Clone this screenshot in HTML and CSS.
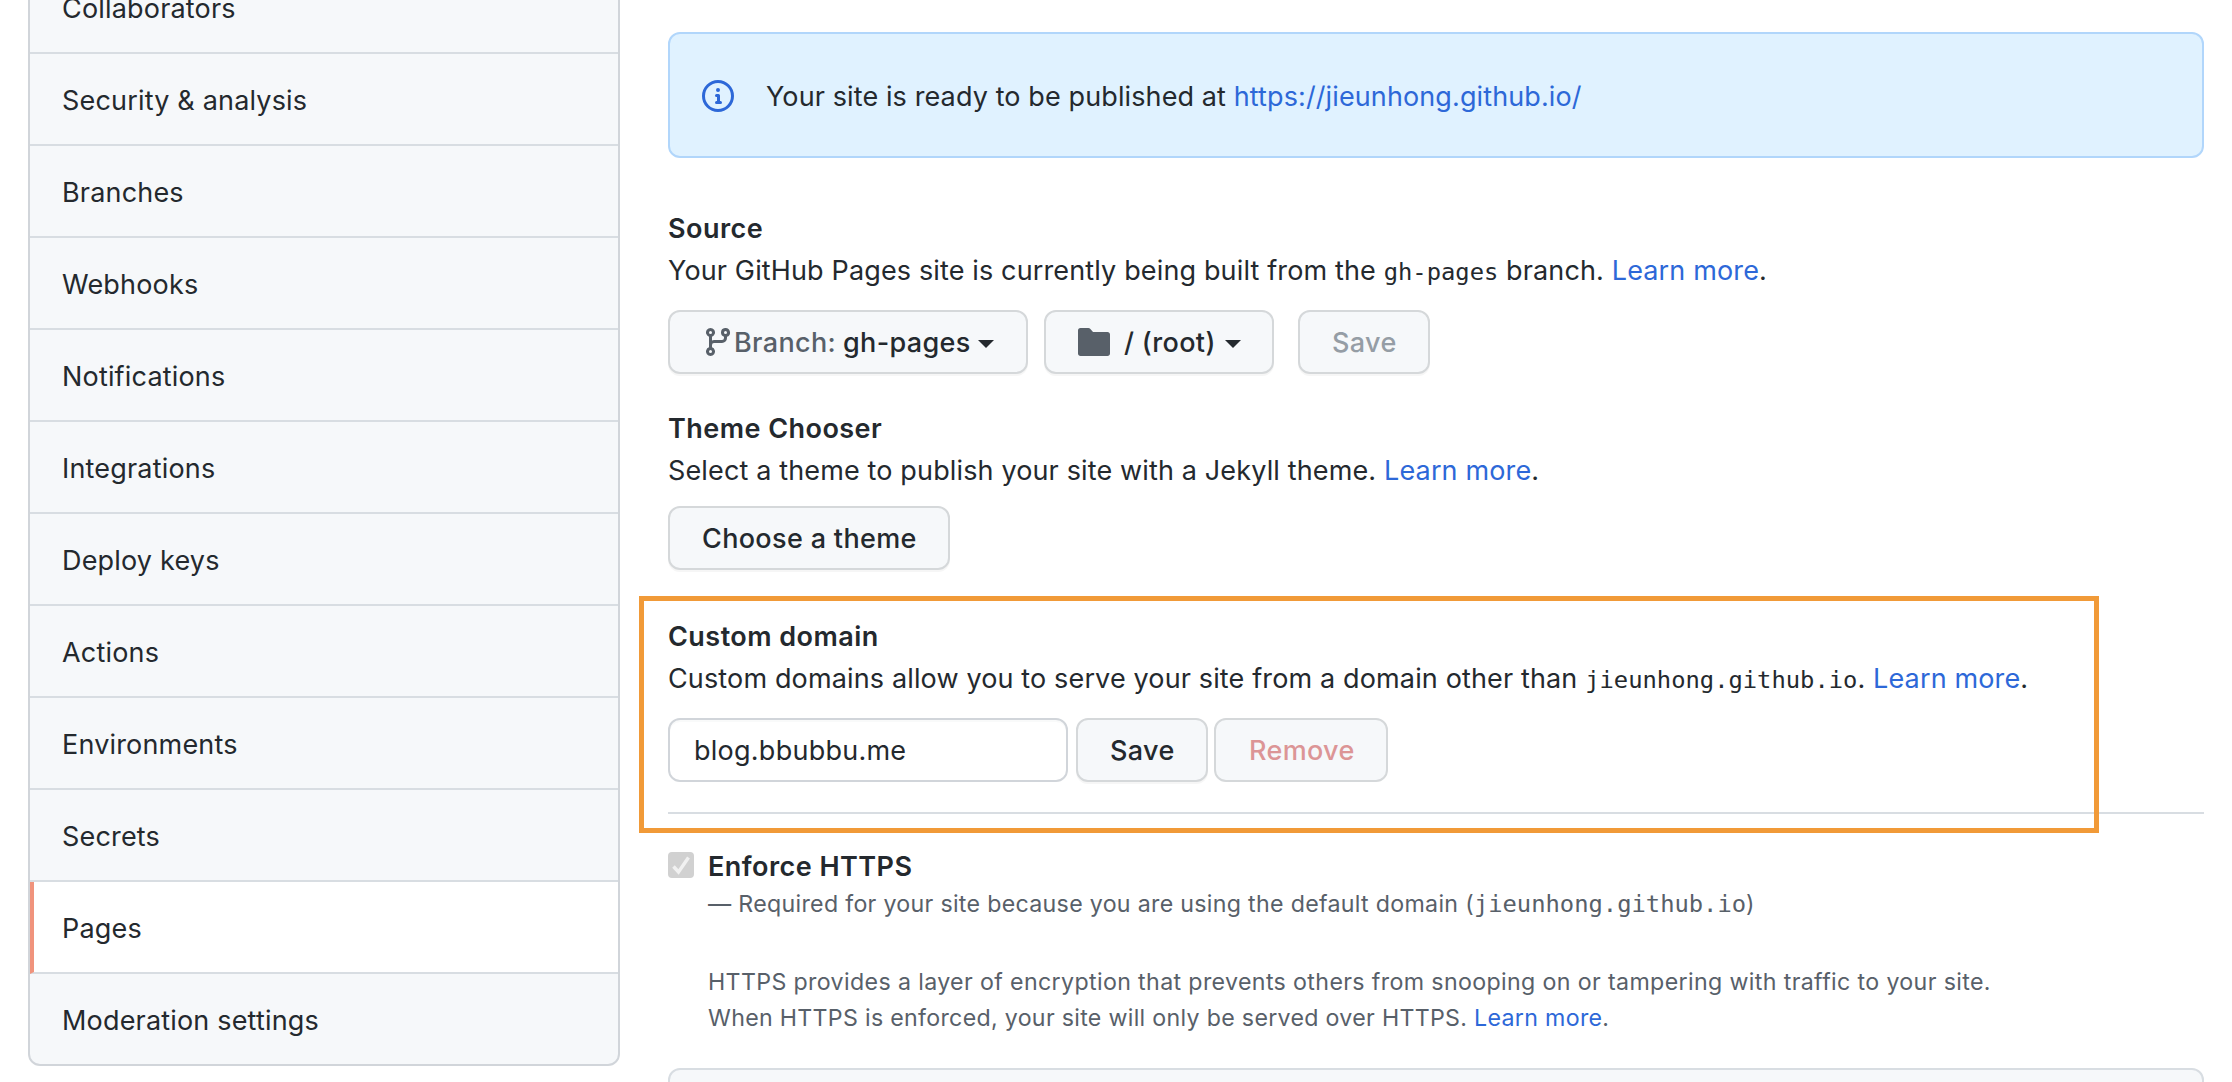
FILE: index.html
```html
<!DOCTYPE html>
<html lang="en">
<head>
<meta charset="utf-8">
<title>Pages settings</title>
<link rel="stylesheet" href="styles.css">
</head>
<body>
<div class="layout">
  <nav class="menu">
    <a class="menu-item">Collaborators</a>
    <a class="menu-item">Security &amp; analysis</a>
    <a class="menu-item">Branches</a>
    <a class="menu-item">Webhooks</a>
    <a class="menu-item">Notifications</a>
    <a class="menu-item">Integrations</a>
    <a class="menu-item">Deploy keys</a>
    <a class="menu-item">Actions</a>
    <a class="menu-item">Environments</a>
    <a class="menu-item">Secrets</a>
    <a class="menu-item selected">Pages</a>
    <a class="menu-item">Moderation settings</a>
  </nav>

  <main class="content">
    <div class="flash">
      <svg class="icon info" viewBox="0 0 16 16"><path fill-rule="evenodd" d="M8 1.5a6.5 6.5 0 100 13 6.5 6.5 0 000-13zM0 8a8 8 0 1116 0A8 8 0 010 8zm6.5-.25A.75.75 0 017.25 7h1a.75.75 0 01.75.75v2.75h.25a.75.75 0 010 1.5h-2a.75.75 0 010-1.5h.25v-2h-.25a.75.75 0 01-.75-.75zM8 6a1 1 0 100-2 1 1 0 000 2z"/></svg>
      <p class="flash-text">Your site is ready to be published at <a class="link">https://jieunhong.github.io/</a></p>
    </div>

    <section class="section source">
      <h3 class="title">Source</h3>
      <p class="text">Your GitHub Pages site is currently being built from the <code class="code">gh-pages</code> branch. <a class="link">Learn more</a>.</p>
      <div class="controls">
        <button class="btn branch">
          <svg class="icon" viewBox="0 0 16 16"><path fill-rule="evenodd" d="M11.75 2.5a.75.75 0 100 1.5.75.75 0 000-1.5zm-2.25.75a2.25 2.25 0 113 2.122V6A2.5 2.5 0 0110 8.500H6a1 1 0 00-1 1v1.128a2.251 2.251 0 11-1.500 0V5.372a2.250 2.250 0 111.500 0v1.836A2.492 2.492 0 016 7h4a1 1 0 001-1v-.628A2.250 2.250 0 019.500 3.250zM4.250 12a.75.75 0 100 1.500.75.75 0 000-1.500zM3.500 3.250a.75.75 0 111.500 0 .75.75 0 01-1.500 0z"/></svg>
          <span class="label muted">Branch:</span>
          <span class="label value">gh-pages</span>
          <span class="caret"></span>
        </button>
        <button class="btn folder">
          <svg class="icon" viewBox="0 0 16 16"><path d="M1.250 1A1.250 1.250 0 000 2.250v11.500C0 14.450.550 15 1.250 15h13.500c.700 0 1.250-.550 1.250-1.250v-9.500C16 3.550 15.450 3 14.750 3h-7a.5.5 0 01-.35-.15L6.200 1.500C5.900 1.150 5.600 1 5.150 1z"/></svg>
          <span class="label value">/ (root)</span>
          <span class="caret"></span>
        </button>
        <button class="btn save" disabled><span class="label">Save</span></button>
      </div>
    </section>

    <section class="section theme">
      <h3 class="title">Theme Chooser</h3>
      <p class="text">Select a theme to publish your site with a Jekyll theme. <a class="link">Learn more</a>.</p>
      <div class="controls"><button class="btn choose"><span class="label">Choose a theme</span></button></div>
    </section>

    <section class="section domain">
      <h3 class="title">Custom domain</h3>
      <p class="text">Custom domains allow you to serve your site from a domain other than <code class="code">jieunhong.github.io</code>. <a class="link">Learn more</a>.</p>
      <div class="controls">
        <input class="field" type="text" value="blog.bbubbu.me">
        <button class="btn save"><span class="label">Save</span></button>
        <button class="btn remove" disabled><span class="label">Remove</span></button>
      </div>
      <div class="highlight"></div>
    </section>

    <section class="https">
      <svg class="checkbox" viewBox="0 0 26 26"><rect width="26" height="26" rx="4" fill="#d1d1d1"/><path d="M5.500 14.500l5 5.500L20.500 5.500" fill="none" stroke="#f1f1f1" stroke-width="3.400"/></svg>
      <div class="https-body">
        <h3 class="title">Enforce HTTPS</h3>
        <p class="note">— Required for your site because you are using the default domain (<code class="code">jieunhong.github.io</code>)</p>
        <p class="note detail"><span class="wide">HTTPS provides a layer of encryption that prevents others from snooping on or tampering with traffic to your site.</span><br>When HTTPS is enforced, your site will only be served over HTTPS. <a class="link">Learn more</a>.</p>
      </div>
    </section>

    <div class="panel"></div>
  </main>
</div>
</body>
</html>
```
FILE: styles.css
```css
* { box-sizing: border-box; }

body {
  margin: 0;
  height: 1082px;
  overflow: hidden;
  background: #fff;
  color: #24292e;
  font: 400 27px/42px Inter, "Liberation Sans", sans-serif;
  letter-spacing: 0.14px;
}

h3, p { margin: 0; white-space: nowrap; }

.layout {
  display: grid;
  grid-template-columns: 592px 1536px;
  column-gap: 48px;
  align-items: start;
  padding-left: 28px;
  height: 1082px;
  overflow: hidden;
}

/* Side menu, scrolled so that its first row is cut off */
.menu {
  display: flex;
  flex-direction: column;
  margin-top: -40px;
  border: 2px solid #d1d5da;
  border-radius: 12px;
  background: #f6f8fa;
  overflow: hidden;
}
.menu-item {
  height: 92px;
  padding-left: 32px;
  border-bottom: 2px solid #d8dde2;
  line-height: 94px;
  letter-spacing: 0.18px;
}
.menu-item:last-child { border-bottom: 0; height: 90px; }
.menu-item.selected {
  padding-left: 28px;
  border-left: 4px solid #f0937c;
  background: #fff;
}

.content { padding-top: 32px; }

.link { color: #2d68d8; }
.icon { width: 32px; height: 32px; fill: currentColor; flex: none; }
.code {
  font: 400 23.8px/1 "DejaVu Sans Mono", "Liberation Mono", monospace;
  letter-spacing: 0;
}

.flash {
  display: flex;
  align-items: center;
  height: 126px;
  padding-left: 32px;
  border: 2px solid #b1d6fb;
  border-radius: 12px;
  background: #e0f2ff;
}
.info { color: #2d68d8; margin-top: 2px; }
.flash-text { margin-left: 32px; padding-top: 4px; letter-spacing: 0.11px; }

.section { position: relative; }
.title { font-size: 27px; font-weight: 600; letter-spacing: 0.46px; }
.source { margin-top: 50px; }
.theme { margin-top: 34px; }
.domain { margin-top: 46px; padding-bottom: 30px; border-bottom: 2px solid #d8dde2; }

.controls { display: flex; margin-top: 18px; }
.theme .controls { margin-top: 14px; }

.btn {
  display: flex;
  align-items: center;
  height: 64px;
  padding: 0 32px;
  border: 2px solid #d5d8da;
  border-radius: 12px;
  background: #f6f8fa;
  box-shadow: 0 2px 0 rgba(27, 31, 35, 0.04);
  color: #24292e;
  font: 500 27px/42px Inter, "Liberation Sans", sans-serif;
  letter-spacing: 0.34px;
  white-space: nowrap;
}
.btn .icon, .muted { color: #586069; }
.label { padding-top: 2px; }
.branch { width: 360px; }
.branch .value { margin-left: 7px; }
.folder { width: 230px; margin-left: 16px; }
.folder .value { margin-left: 14px; }
.save { width: 132px; }
.source .save { margin-left: 24px; color: #959da5; }
.choose { width: 282px; }
.caret {
  margin: 4px 0 0 7px;
  border: 8px solid transparent;
  border-top-color: currentColor;
  border-bottom: 0;
}
.folder .caret { margin-left: 9px; }

.field {
  width: 400px;
  height: 64px;
  margin: 0 8px 0 0;
  padding: 0 24px;
  border: 2px solid #d1d5da;
  border-radius: 12px;
  background: #fff;
  box-shadow: inset 0 2px 0 rgba(225, 228, 232, 0.2);
  color: inherit;
  font: inherit;
  letter-spacing: 0.25px;
}
.remove { width: 174px; margin-left: 6px; padding-left: 33px; box-shadow: none; color: #dc9596; }

/* Orange annotation frame laid over the custom domain block */
.highlight {
  position: absolute;
  left: -29px;
  top: -20px;
  width: 1460px;
  height: 237px;
  border: 5px solid #f19a38;
}

.https { display: flex; align-items: flex-start; margin-top: 32px; }
.checkbox { width: 26px; height: 26px; margin: 6px 14px 0 0; }
.note {
  margin-top: -2px;
  color: #586069;
  font-size: 23.2px;
  line-height: 36px;
  letter-spacing: 0.3px;
}
.detail { margin-top: 42px; }
.wide { letter-spacing: 0.36px; }

.panel {
  height: 100px;
  margin-top: 32px;
  border: 2px solid #d8dde2;
  border-radius: 12px;
  background: #f6f8fa;
}
```
